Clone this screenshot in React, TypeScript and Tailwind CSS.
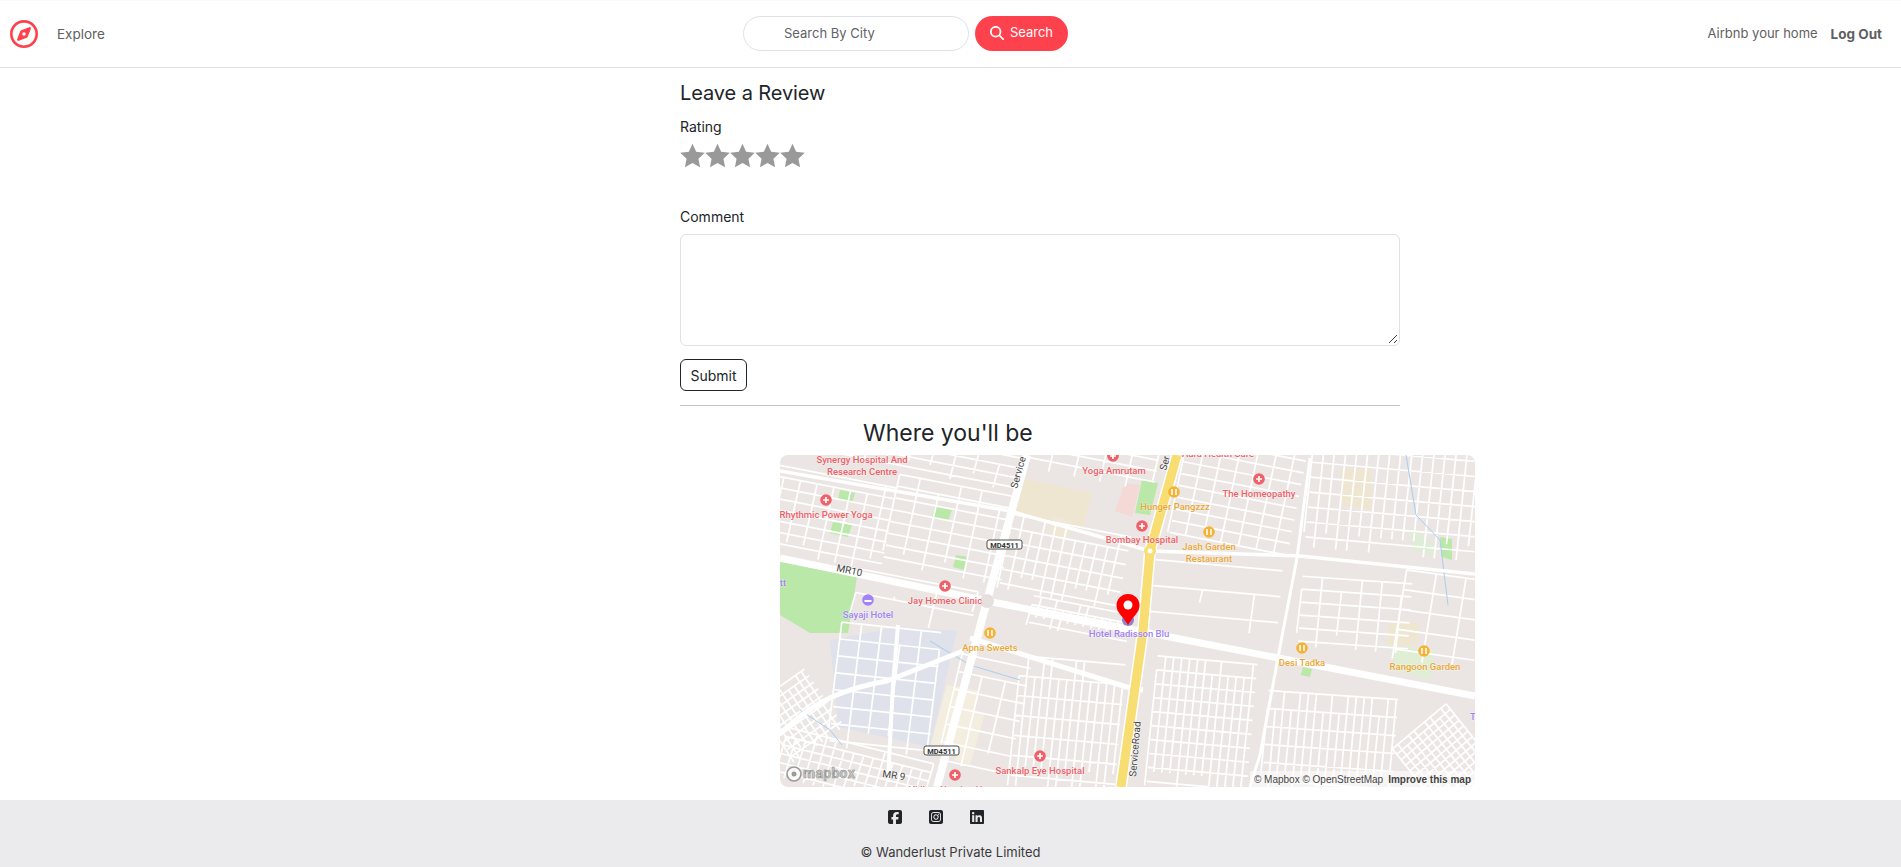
import {
  FaLinkedin,
  FaMagnifyingGlass,
  FaRegCompass,
  FaSquareFacebook,
  FaSquareInstagram,
} from "react-icons/fa6";

type District = { x: number; y: number; w: number; h: number; dx: number; dy: number; rot: number; seed: number };

// street blocks of the map, in map coordinates
const districts: District[] = [
  { x: -20, y: 20, w: 130, h: 85, dx: 17, dy: 11, rot: 11, seed: 3 },
  { x: 110, y: 30, w: 120, h: 90, dx: 21, dy: 12, rot: 11, seed: 4 },
  { x: 0, y: -20, w: 240, h: 34, dx: 22, dy: 10, rot: 11, seed: 6 },
  { x: 250, y: -40, w: 130, h: 65, dx: 26, dy: 11, rot: 11, seed: 8 },
  { x: 225, y: 70, w: 120, h: 75, dx: 11, dy: 14, rot: 11, seed: 5 },
  { x: 400, y: -30, w: 120, h: 120, dx: 18, dy: 12, rot: 11, seed: 11 },
  { x: 530, y: -30, w: 180, h: 130, dx: 11, dy: 15, rot: 5, seed: 17 },
  { x: 520, y: 125, w: 110, h: 70, dx: 20, dy: 13, rot: 4, seed: 23 },
  { x: 620, y: 120, w: 80, h: 90, dx: 30, dy: 20, rot: 8, seed: 29 },
  { x: 370, y: 110, w: 130, h: 65, dx: 52, dy: 26, rot: 5, seed: 31 },
  { x: 250, y: 150, w: 100, h: 30, dx: 8, dy: 9, rot: 11, seed: 37 },
  { x: 235, y: 205, w: 105, h: 130, dx: 8, dy: 20, rot: 5, seed: 41 },
  { x: 372, y: 205, w: 100, h: 130, dx: 8, dy: 14, rot: 5, seed: 43 },
  { x: 485, y: 240, w: 130, h: 100, dx: 8, dy: 18, rot: 4, seed: 47 },
  { x: 170, y: 205, w: 70, h: 110, dx: 24, dy: 18, rot: 12, seed: 53 },
  { x: 55, y: 172, w: 100, h: 125, dx: 20, dy: 17, rot: 6, seed: 59 },
  { x: -10, y: 225, w: 60, h: 70, dx: 7, dy: 8, rot: -35, seed: 61 },
  { x: 0, y: 290, w: 150, h: 50, dx: 10, dy: 9, rot: 14, seed: 67 },
  { x: 75, y: 125, w: 120, h: 45, dx: 40, dy: 24, rot: 11, seed: 71 },
  { x: 630, y: 262, w: 70, h: 80, dx: 7, dy: 7, rot: -40, seed: 73 },
];

function streetPath(d: District) {
  let s = d.seed * 7919;
  const rnd = () => {
    s = (s * 1103515245 + 12345) % 2147483648;
    return s / 2147483648;
  };
  let path = "";
  for (let y = d.y; y <= d.y + d.h; y += d.dy) {
    path += `M${d.x} ${y.toFixed(1)}L${d.x + d.w} ${y.toFixed(1)}`;
  }
  for (let x = d.x; x <= d.x + d.w; x += d.dx) {
    const from = d.y + Math.floor(rnd() * 2) * d.dy;
    const to = d.y + d.h - Math.floor(rnd() * 2) * d.dy;
    path += `M${x.toFixed(1)} ${from.toFixed(1)}L${(x - 2).toFixed(1)} ${to.toFixed(1)}`;
  }
  return path;
}

const red = "#ef6068";
const orange = "#e9a835";
const purple = "#a183f5";

const labels = [
  { t: "Synergy Hospital And", x: 82, y: 8, c: red },
  { t: "Research Centre", x: 82, y: 20, c: red },
  { t: "Yoga Amrutam", x: 334, y: 19, c: red },
  { t: "Rhythmic Power Yoga", x: 46, y: 63, c: red },
  { t: "Jay Homeo Clinic", x: 165, y: 149, c: red },
  { t: "Sayaji Hotel", x: 88, y: 163, c: purple },
  { t: "tt", x: 3, y: 131, c: purple },
  { t: "Aura Health Care", x: 438, y: 2, c: red },
  { t: "Hunger Pangzzz", x: 395, y: 55, c: orange },
  { t: "The Homeopathy", x: 479, y: 42, c: red },
  { t: "Bombay Hospital", x: 362, y: 88, c: red },
  { t: "Jash Garden", x: 429, y: 95, c: orange },
  { t: "Restaurant", x: 429, y: 107, c: orange },
  { t: "Hotel Radisson Blu", x: 349, y: 182, c: purple },
  { t: "Apna Sweets", x: 210, y: 196, c: orange },
  { t: "Sankalp Eye Hospital", x: 260, y: 319, c: red },
  { t: "Vidhya Nursing Home", x: 175, y: 338, c: red },
  { t: "Desi Tadka", x: 522, y: 211, c: orange },
  { t: "Rangoon Garden", x: 645, y: 215, c: orange },
  { t: "T", x: 693, y: 265, c: purple },
];

const pois = [
  { x: 46, y: 45, c: red, kind: "plus" },
  { x: 165, y: 131, c: red, kind: "plus" },
  { x: 333, y: 1, c: red, kind: "plus" },
  { x: 479, y: 24, c: red, kind: "plus" },
  { x: 362, y: 71, c: red, kind: "plus" },
  { x: 260, y: 301, c: red, kind: "plus" },
  { x: 175, y: 320, c: red, kind: "plus" },
  { x: 394, y: 37, c: "#f5b335", kind: "food" },
  { x: 429, y: 77, c: "#f5b335", kind: "food" },
  { x: 210, y: 178, c: "#f5b335", kind: "food" },
  { x: 522, y: 193, c: "#f5b335", kind: "food" },
  { x: 644, y: 196, c: "#f5b335", kind: "food" },
  { x: 88, y: 145, c: purple, kind: "bed" },
];

const areas = [
  { p: "0,107 77,122 68,178 30,178 0,160", c: "#b9e8a8" },
  { p: "240,23 313,38 303,73 231,58", c: "#efe6d2" },
  { p: "50,185 118,172 177,176 150,292 58,272", c: "#dfe2ea" },
  { p: "167,230 198,236 182,300 150,292", c: "#f4eee0" },
  { p: "190,255 205,258 190,310 175,305", c: "#f4eee0" },
  { p: "560,15 590,12 592,55 562,50", c: "#efe6d2" },
  { p: "610,165 640,168 636,190 606,190", c: "#efe6d2" },
  { p: "610,190 655,195 650,225 615,215", c: "#e1eed6" },
  { p: "345,28 360,30 352,62 335,56", c: "#f4d9d6" },
  { p: "362,25 378,28 370,60 355,58", c: "#b9e8a8" },
  { p: "630,70 660,95 650,100 632,95", c: "#dfecd6" },
  { p: "660,82 672,84 672,105 662,102", c: "#b9e8a8" },
  { p: "272,60 292,66 288,84 268,78", c: "#f0e8d6" },
  { p: "60,35 75,38 72,48 58,45", c: "#b9e8a8" },
  { p: "53,67 72,70 68,82 50,78", c: "#b9e8a8" },
  { p: "155,52 172,55 168,66 152,62", c: "#b9e8a8" },
  { p: "176,100 188,102 184,115 173,112", c: "#b9e8a8" },
  { p: "523,212 532,214 530,222 521,220", c: "#b9e8a8" },
];

function MapPanel() {
  return (
    <div className="relative ml-[780px] h-[332px] w-[695px] overflow-hidden rounded-lg bg-[#ebe6e3]">
      <svg viewBox="0 0 695 332" className="block h-[332px] w-[695px]" fontFamily="Roboto, sans-serif">
        {areas.map((a) => (
          <polygon key={a.p} points={a.p} fill={a.c} />
        ))}
        {districts.map((d) => (
          <path
            key={d.seed}
            d={streetPath(d)}
            stroke="#fff"
            strokeWidth="1.7"
            fill="none"
            transform={`rotate(${d.rot} ${d.x + d.w / 2} ${d.y + d.h / 2})`}
          />
        ))}
        {/* water */}
        <path d="M626 0L636 60L660 85L668 150M20 255L50 275L62 290M150 186L190 210L240 225" stroke="#a9cdf0" strokeWidth="1" fill="none" />
        {/* big roads */}
        <g stroke="#fff" fill="none" strokeLinejoin="round">
          <path d="M0 16L230 56L370 96L520 101L695 119" strokeWidth="3.5" />
          <path d="M0 103L207 146L400 184L695 241" strokeWidth="7" />
          <path d="M190 183L350 233L363 235" strokeWidth="5" />
          <path d="M0 279C25 255 50 236 107 226L183 196" strokeWidth="5" />
          <path d="M530 3L517 103L503 176L480 300L470 332" strokeWidth="3" />
          <path d="M118 170L113 230L108 325" strokeWidth="4" />
          <path d="M247 0L207 146L157 332" strokeWidth="8" />
          <path d="M397 0L370 96L363 176L341 332" strokeWidth="12" />
        </g>
        <path d="M397 0L370 96L363 176L341 332" stroke="#f8de72" strokeWidth="9" fill="none" />
        <circle cx="207" cy="146" r="7" fill="#e4e0dd" />
        <circle cx="370" cy="96" r="6" fill="#f8de72" />
        <circle cx="370" cy="96" r="2.5" fill="#fff" />

        {pois.map((p) => (
          <g key={`${p.x}-${p.y}`}>
            <circle cx={p.x} cy={p.y} r="5.8" fill={p.c} />
            {p.kind === "plus" && <path d={`M${p.x - 3} ${p.y}h6M${p.x} ${p.y - 3}v6`} stroke="#fff" strokeWidth="1.7" />}
            {p.kind === "food" && (
              <path d={`M${p.x - 2} ${p.y - 3}v6M${p.x + 2} ${p.y - 3}v6`} stroke="#fff" strokeWidth="1.5" />
            )}
            {p.kind === "bed" && <path d={`M${p.x - 3.5} ${p.y + 1}h7`} stroke="#fff" strokeWidth="2" />}
          </g>
        ))}
        {labels.map((l) => (
          <text
            key={l.t}
            x={l.x}
            y={l.y}
            textAnchor="middle"
            fontSize="9.5"
            fontWeight="500"
            fill={l.c}
            stroke="#fff"
            strokeOpacity="0.5"
            strokeWidth="1"
            paintOrder="stroke"
          >
            {l.t}
          </text>
        ))}

        {/* road names */}
        <g fill="#444" fontSize="10" stroke="#fff" strokeOpacity="0.7" strokeWidth="1.2" paintOrder="stroke">
          <text transform="translate(56 116) rotate(12)">MR10</text>
          <text transform="translate(102 322) rotate(8)">MR 9</text>
          <text transform="translate(237 34) rotate(-74)">Service</text>
          <text transform="translate(386 16) rotate(-74)">Ser</text>
          <text transform="translate(356 322) rotate(-85)">ServiceRoad</text>
        </g>
        <g>
          <rect x="207" y="85" width="35" height="9" rx="2" fill="#fff" stroke="#222" strokeWidth="0.8" />
          <text x="224.5" y="92.5" textAnchor="middle" fontSize="7.5" fontWeight="700" fill="#333">MD4511</text>
          <rect x="144" y="291" width="35" height="9" rx="2" fill="#fff" stroke="#222" strokeWidth="0.8" />
          <text x="161.5" y="298.5" textAnchor="middle" fontSize="7.5" fontWeight="700" fill="#333">MD4511</text>
        </g>

        {/* marker */}
        <circle cx="348" cy="165" r="6" fill="#7b6fc4" opacity="0.85" />
        <path d="M348 170C343 161 336.5 158 336.5 150.500A11.500 11.500 0 0 1 359.500 150.500C359.500 158 353 161 348 170Z" fill="#f00" />
        <circle cx="348" cy="150" r="4.500" fill="#fff" />

        {/* mapbox wordmark */}
        <circle cx="14" cy="319" r="7" fill="#fff" fillOpacity="0.7" stroke="#9a9a9a" strokeWidth="1.6" />
        <circle cx="14" cy="319" r="2.500" fill="#9a9a9a" />
        <text x="23" y="323" fontSize="14" fontWeight="700" letterSpacing="0.3" fill="#c8c8c8" stroke="#8a8a8a" strokeWidth="0.5">mapbox</text>
      </svg>
      <div className="absolute bottom-0 right-0 flex h-[16px] items-center gap-[5px] bg-white/60 pr-[4px] pl-[4px] font-['Liberation_Sans',sans-serif] text-[10px] text-[#444]">
        <span>© Mapbox © OpenStreetMap</span>
        <span className="font-bold">Improve this map</span>
      </div>
    </div>
  );
}

function Star() {
  return (
    <svg viewBox="0 0 24 24" className="h-[27px] w-[25px] fill-[#999999]">
      <path d="M12 0.800L15.500 8.300L23.800 9.300L17.700 15L19.300 23.300L12 19.200L4.700 23.300L6.300 15L0.200 9.300L8.500 8.300Z" />
    </svg>
  );
}

export default function App() {
  return (
    <div className="flex h-[867px] flex-col overflow-hidden bg-white font-['Inter',sans-serif] text-[#212529]">
      <nav className="flex h-[68px] items-center border-t border-b border-t-[#f8f8f8] border-b-[#e0e0e3] pr-[19px] pl-[10px]">
        <div className="flex w-[733px] items-center">
          <FaRegCompass className="text-[28px] text-[#fe424d]" />
          <span className="ml-[19px] text-[13.500px] text-[#5f5f5f]">Explore</span>
        </div>
        <div className="mb-[2px] flex items-center gap-[6px]">
          <input
            placeholder="Search By City"
            className="h-[35px] w-[226px] rounded-full border border-[#dee2e6] pl-[40px] text-[13px] placeholder:text-[#5f6368]"
          />
          <button className="flex h-[35px] w-[93px] items-center justify-center gap-[6px] rounded-full bg-[#fe424d] text-[13px] text-white">
            <FaMagnifyingGlass className="text-[14px]" />
            Search
          </button>
        </div>
        <div className="ml-auto flex items-center gap-[13px] text-[#5f5f5f]">
          <span className="text-[13px]">Airbnb your home</span>
          <span className="text-[13.500px] font-bold">Log Out</span>
        </div>
      </nav>

      <main className="flex-1">
        <div className="ml-[680px] flex w-[720px] flex-col">
          <h4 className="mt-[10px] text-[20px] leading-[30px] font-normal tracking-[-0.1px]">Leave a Review</h4>
          <label className="mt-[9px] text-[14px] leading-[20px]">Rating</label>
          <div className="mt-[5px] flex h-[27px]">
            <Star />
            <Star />
            <Star />
            <Star />
            <Star />
          </div>
          <label className="mt-[38px] text-[14px] leading-[20px]">Comment</label>
          <div className="relative mt-[7px] h-[112px]">
            <textarea className="block h-[112px] w-[720px] resize-none rounded-md border border-[#dee2e6]" />
            <svg viewBox="0 0 10 10" className="absolute right-[2px] bottom-[2px] h-[10px] w-[10px]">
              <path d="M1 9L9 1M6 9L9 6" stroke="#444" strokeWidth="1" />
            </svg>
          </div>
          <button className="mt-[13px] h-[32px] w-[67px] rounded-md border border-[#212529] text-[14px]">Submit</button>
          <hr className="mt-[14px] border-t border-[#c4c4c4]" />
          <h3 className="mt-[10px] mb-[5px] ml-[183px] text-[23px] leading-[34px] font-normal">Where you'll be</h3>
        </div>
        <MapPanel />
      </main>

      <footer className="flex h-[67px] flex-col items-center bg-[#ebebed]">
        <div className="flex items-center gap-[25px] pt-[9px] pr-[29px] text-[16px] text-[#212529]">
          <FaSquareFacebook />
          <FaSquareInstagram />
          <FaLinkedin />
        </div>
        <div className="mt-[17px] text-[13px] leading-[20px] text-[#3a3a3a]">© Wanderlust Private Limited</div>
      </footer>
    </div>
  );
}
